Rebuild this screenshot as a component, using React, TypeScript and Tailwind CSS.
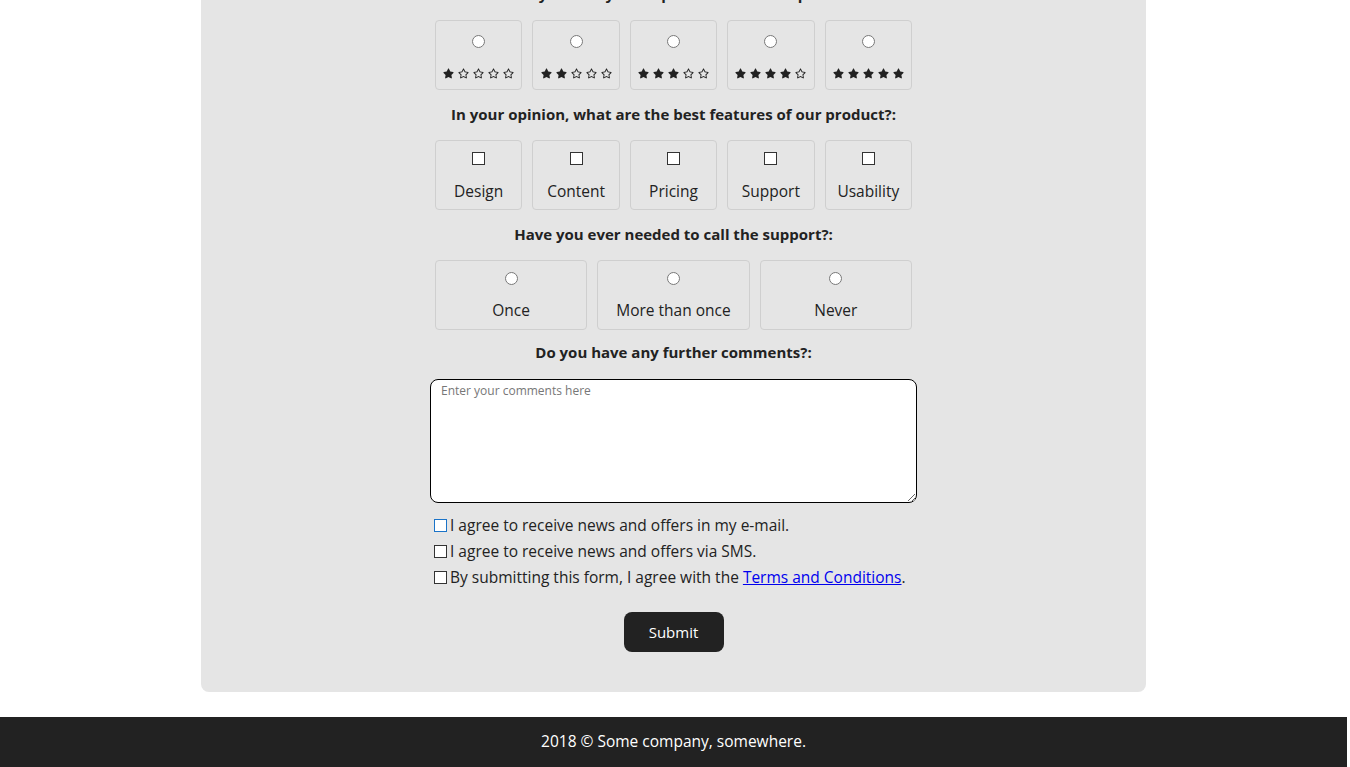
import { FaStar, FaRegStar } from "react-icons/fa";

const ratings = [1, 2, 3, 4, 5];
const features = ["Design", "Content", "Pricing", "Support", "Usability"];
const support = ["Once", "More than once", "Never"];

const Heading = ({ children, className = "" }: { children: React.ReactNode; className?: string }) => (
  <h2 className={`h-5 text-center text-[15px] font-bold leading-5 text-[#222] ${className}`}>{children}</h2>
);

const App = () => {
  return (
    <div className="flex h-[767px] flex-col overflow-hidden bg-white pr-[3px] font-['Open_Sans',sans-serif] text-[#222]">
      <div className="mx-auto -mt-4 w-[945px] rounded-lg bg-[#e5e5e5] pb-10">
        <form className="mx-auto w-[487px]">
          <Heading>How do you rate your experience with our product?:</Heading>
          {/* rating */}
          <div className="mt-4 grid grid-cols-5 gap-[10px] px-[5px]">
            {ratings.map((n) => (
              <label
                key={n}
                className="flex h-[70px] flex-col items-center rounded border border-[#cfcfcf] pt-[11px]">
                <input type="radio" name="rating" className="m-[3px] h-[13px] w-[13px]" />
                <span className="mt-[17px] flex gap-[4px] text-[#222]">
                  {ratings.map((s) =>
                    s <= n ? <FaStar key={s} className="h-[11px] w-[11px]" /> : <FaRegStar key={s} className="h-[11px] w-[11px]" />
                  )}
                </span>
              </label>
            ))}
          </div>

          <Heading className="mt-[14px]">In your opinion, what are the best features of our product?:</Heading>
          <div className="mt-4 grid grid-cols-5 gap-[10px] px-[5px]">
            {features.map((f) => (
              <label
                key={f}
                className="flex h-[70px] flex-col items-center rounded border border-[#cfcfcf] pt-[8px]">
                <input
                  type="checkbox"
                  className="m-[3px] h-[13px] w-[13px] appearance-none border border-[#333] bg-white"
                />
                <span className="mt-[11px] text-[15.5px] leading-6">{f}</span>
              </label>
            ))}
          </div>

          <Heading className="mt-[14px]">Have you ever needed to call the support?:</Heading>
          <div className="mt-4 grid grid-cols-3 gap-[10px] px-[5px]">
            {support.map((s) => (
              <label
                key={s}
                className="flex h-[70px] flex-col items-center rounded border border-[#cfcfcf] pt-[8px]">
                <input type="radio" name="support" className="m-[3px] h-[13px] w-[13px]" />
                <span className="mt-[10px] text-[15.5px] leading-6">{s}</span>
              </label>
            ))}
          </div>

          <Heading className="mt-3">Do you have any further comments?:</Heading>
          <textarea
            placeholder="Enter your comments here"
            className="mt-[17px] block h-[124px] w-full rounded-lg border border-black bg-white px-[10px] py-[2px] text-[12px] placeholder:text-[#777]"
          />

          <div className="mt-[9px] text-[15.5px] leading-[26px]">
            <label className="flex items-center">
              <input
                type="checkbox"
                className="mx-[3px] ml-[4px] h-[13px] w-[13px] appearance-none border border-[#1a73c8] bg-white"
              />
              I agree to receive news and offers in my e-mail.
            </label>
            <label className="flex items-center">
              <input
                type="checkbox"
                className="mx-[3px] ml-[4px] h-[13px] w-[13px] appearance-none border border-[#333] bg-white"
              />
              I agree to receive news and offers via SMS.
            </label>
            <label className="flex items-center">
              <input
                type="checkbox"
                className="mx-[3px] ml-[4px] h-[13px] w-[13px] appearance-none border border-[#333] bg-white"
              />
              <span>
                By submitting this form, I agree with the{" "}
                <a href="#" className="text-[#0000ee] underline">
                  Terms and Conditions
                </a>
                .
              </span>
            </label>
          </div>

          <div className="mt-[22px] flex justify-center">
            <button
              type="button"
              className="h-10 w-[100px] rounded-lg bg-[#222] text-[15px] font-medium text-white">
              Submit
            </button>
          </div>
        </form>
      </div>

      <footer className="mt-[25px] flex h-[50px] items-center justify-center bg-[#222] text-[15.5px] text-white">
        2018 © Some company, somewhere.
      </footer>
    </div>
  );
};

export default App;
